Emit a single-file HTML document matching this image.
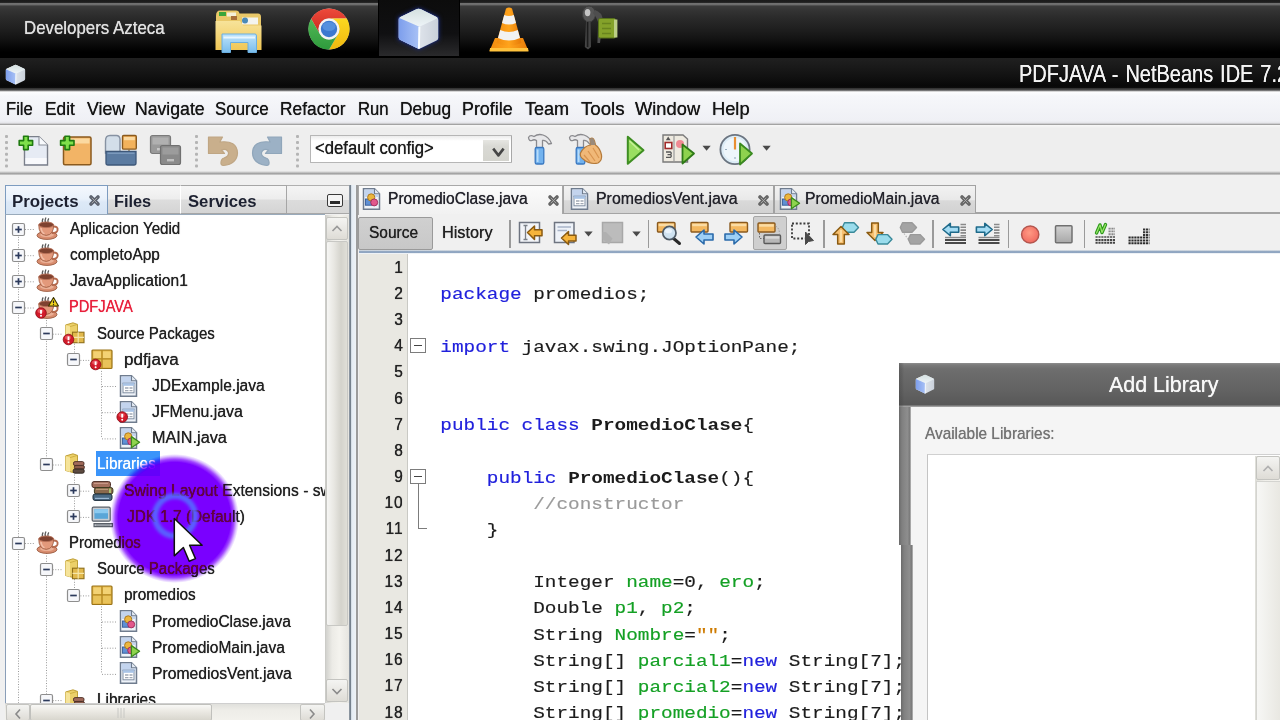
<!DOCTYPE html>
<html lang="en"><head><meta charset="utf-8"><title>PDFJAVA - NetBeans IDE 7.2</title>
<style>
*{box-sizing:border-box;margin:0;padding:0}
html,body{width:1280px;height:720px;overflow:hidden;background:#f0f0f0}
body{position:relative;font-family:"Liberation Sans",sans-serif;color:#111;font-size:16px}
.a{position:absolute}
.t{position:absolute;white-space:pre;line-height:1;transform-origin:0 0;text-shadow:0 0 .7px}
svg{position:absolute;overflow:visible}
#taskbar{left:0;top:0;width:1280px;height:58px;background:linear-gradient(#1b1b1b 0,#1e1e1e 2.4px,#707070 3.4px,#6c6c6c 4.8px,#3c3c3c 6px,#343434 10px,#2a2a2a 18px,#202020 28px,#141414 38px,#080808 46px,#000 52px,#000 100%)}
#tbsel{left:378px;top:0;width:82px;height:56px;background:linear-gradient(#0c0c0c,#101012 60%,#2a2a2c 100%);border-left:1px solid #000;border-right:1px solid #000}
#titlebar{left:0;top:58px;width:1280px;height:34px;background:linear-gradient(#202020 0,#1a1a1a 8px,#101010 20px,#080808 28px,#0c0c0c 29.6px,#383838 30.6px,#484848 31.8px,#8a8a8a 32.8px,#ececec 33.7px,#fff 34px)}
#menubar{left:0;top:92px;width:1280px;height:33px;background:linear-gradient(#fdfdfe 0,#f6f7fa 4px,#eff0f5 29px,#e4e4e8 31px,#a3a3a3 32.5px,#b8b8b8 33px)}
#toolbar{left:0;top:125px;width:1280px;height:50px;background:linear-gradient(#f8f8f8 0,#eee 3px,#eee 46px,#d0d0d0 47px,#a4a4a4 48.5px,#b4b4b4 49.3px,#e4e4e4 50px)}
/* left panel */
#ltabs{left:5px;top:185px;width:345px;height:29px;background:linear-gradient(#f4f4f4 0,#ececec 50%,#dcdcdc 51%,#d6d6d6 100%);border-top:1px solid #b0b0b0;border-bottom:1px solid #a8a8a8}
.ltab{top:185px;height:29px;border:1px solid #a6a6a6;border-left-color:#fff;background:linear-gradient(#f6f6f6 0,#ededed 48%,#dddddd 52%,#d4d4d4 100%)}
#ltab1{left:5px;top:185px;width:103px;height:30px;border:1.5px solid #7d9cc0;border-bottom:none;background:linear-gradient(#f4f8fd 0,#e9f1fb 45%,#dde9f7 55%,#d6e4f4 100%)}
#tree{left:5px;top:214px;width:320px;height:490px;background:#fff;border-left:1.5px solid #8a9eb8;border-top:1px solid #9ab}
#vsb{left:325px;top:215px;width:24px;height:488px;background:linear-gradient(90deg,#c8c8c4 0,#d4d4d0 1.5px,#ecebe6 30%,#f4f3ee 60%,#e6e5e0 100%)}
#vthumb{left:325.5px;top:241px;width:22px;height:385px;border:1px solid #c8c8c4;border-radius:2px;background:linear-gradient(90deg,#f6f6f4 0,#e8e7e2 35%,#d4d3cc 70%,#e0dfd8 100%)}
.sbtn{border:1px solid #c4c4c0;border-radius:2px;background:linear-gradient(#f4f4f2,#dedcd6)}
#hsb{left:5px;top:703px;width:320px;height:17px;background:linear-gradient(#e0e0dc 0,#eeede8 40%,#f2f1ec 100%);border-top:1px solid #cfcfcf}
#hthumb{left:30px;top:704px;width:182px;height:17px;border:1px solid #c0c0bc;border-radius:2px;background:linear-gradient(#f8f8f6 0,#eceae4 40%,#d8d6ce 100%)}
#lright{left:348.6px;top:185px;width:8px;height:535px;background:linear-gradient(90deg,#a8b0b8 0,#6e7a88 1px,#7a8692 1.8px,#e4ecf4 2.6px,#eef2f6 7px,#d8d8d8 8px)}
/* editor */
#edleft{left:356.3px;top:185px;width:1.8px;height:535px;background:#9c9c9c}
#etabrow{left:358px;top:185px;width:922px;height:29.3px;border-bottom:2px solid #a4a4a4}
.etab{top:185px;height:28px;border:1px solid #a2a2a2;border-bottom:none;background:linear-gradient(#f2f2f2 0,#e9e9e9 50%,#d9d9d9 55%,#d2d2d2 100%)}
#etab1{left:358px;top:185px;width:205px;height:30px;border:1px solid #a8a8a8;border-bottom:none;background:linear-gradient(#fbfbfb,#f1f1f1)}
#etool{left:359px;top:214px;width:921px;height:39.5px;background:linear-gradient(#f0f0f0 0,#f0f0f0 36px,#b4c2d2 36.8px,#8ea4c0 37.6px,#90a6c2 38.6px,#c4d0de 39.2px,#eef2f6 39.5px)}
#srcbtn{left:358px;top:217px;width:75px;height:33px;background:linear-gradient(#d0d0d0,#c8c8c8);border:1px solid #9a9a9a;border-radius:2px}
#togbtn{left:753px;top:216px;width:34px;height:34px;background:#cfcfcf;border:1px solid #a6a6a6;border-radius:2px}
.vsep{width:1.5px;background:#9a9a9a}
#gutter{left:359px;top:253.5px;width:49px;height:467px;background:#e9e8e2;border-right:1px solid #c9c9c4}
#code{left:408px;top:253.5px;width:872px;height:467px;background:#fff}
.fold{width:15.5px;height:15.5px;border:1px solid #7c7c7c;background:#fff}
.fold:after{content:"";position:absolute;left:3px;top:6.2px;width:7.5px;height:1.2px;background:#444}
/* dialog */
#dlg{left:898.5px;top:363px;width:382px;height:182px;background:#f5f5f5}
#dlg2{left:900.5px;top:545px;width:380px;height:175px;background:#f5f5f5}
#dtitle{left:898.5px;top:362.6px;width:382px;height:44.4px;background:linear-gradient(90deg,rgba(60,60,60,.35) 0,rgba(60,60,60,.2) 3px,rgba(60,60,60,0) 5px),linear-gradient(#8e8e8e 0,#7a7a7a 2px,#6e6e6e 6px,#686868 16px,#626262 28px,#5a5a5a 39px,#585858 41.5px,#8a8a8a 43px,#c4c4c4 44.4px)}
#dleft{left:898.5px;top:405px;width:12.5px;height:140px;background:linear-gradient(90deg,#6a6a6a 0,#808080 25%,#8e8e8e 70%,#7a7a7a 90%,#c8c8c8 100%)}
#dlist{left:927px;top:454px;width:353px;height:266px;background:#fff;border-left:1.5px solid #c4c4c4;border-top:1.5px solid #d0d0d0}
#dsb{left:1255px;top:456px;width:25px;height:264px;background:linear-gradient(90deg,#deded8 0,#f0efea 40%,#f4f3ee 100%)}
/* highlight */
#halo{left:109.5px;top:453.5px;width:129px;height:129px;border-radius:50%;mix-blend-mode:multiply;background:radial-gradient(circle closest-side,rgb(122,0,255) 0,rgb(122,0,255) 87%,rgba(128,10,255,.75) 92%,rgba(135,40,255,.3) 96.5%,rgba(140,60,255,0) 100%)}
#halo2{left:109.5px;top:453.5px;width:129px;height:129px;border-radius:50%;mix-blend-mode:lighten;background:radial-gradient(circle closest-side,rgb(100,0,66) 0,rgb(100,0,66) 86%,rgba(100,0,66,0) 95%)}
#ring{left:151.5px;top:493px;width:46px;height:46px;border-radius:50%;border:6.4px solid rgba(84,112,255,.85);filter:blur(1.4px)}
.ln{right:876.6px;letter-spacing:.9px;font-size:16px;color:#222;transform:scaleX(.97);transform-origin:100% 0}
.cd{left:440.3px;font-family:'Liberation Mono',monospace;font-size:19.38px;text-shadow:none;-webkit-text-stroke:.18px;transform:scaleY(.84);transform-origin:0 76.69%}
#dleft2{left:900.5px;top:545px;width:12.5px;height:175px;background:linear-gradient(90deg,#6a6a6a 0,#808080 25%,#8e8e8e 70%,#7a7a7a 90%,#c8c8c8 100%)}
</style></head><body>
<div class="a" id="taskbar"></div><div class="a" id="tbsel"></div><div class="a" id="titlebar"></div><div class="a" id="menubar"></div><div class="a" id="toolbar"></div>
<span class="t" style="left:24.20px;top:19.46px;font-size:18.6px;color:#e0e0e0;transform:scaleX(0.9068);">Developers Azteca</span>
<span class="t" style="left:1019.4px;top:63.26px;font-size:23.2px;color:#f4f4f4;word-spacing:1.6px;transform:scaleX(.862)">PDFJAVA - NetBeans IDE 7.2</span>
<span class="t" style="left:6.00px;top:99.99px;font-size:18.2px;color:#151515;transform:scaleX(0.9143);">File</span>
<span class="t" style="left:44.95px;top:99.99px;font-size:18.2px;color:#151515;transform:scaleX(0.9523);">Edit</span>
<span class="t" style="left:86.70px;top:99.99px;font-size:18.2px;color:#151515;transform:scaleX(0.9746);">View</span>
<span class="t" style="left:135.20px;top:99.99px;font-size:18.2px;color:#151515;transform:scaleX(0.9694);">Navigate</span>
<span class="t" style="left:215.20px;top:99.99px;font-size:18.2px;color:#151515;transform:scaleX(0.9299);">Source</span>
<span class="t" style="left:280.20px;top:99.99px;font-size:18.2px;color:#151515;transform:scaleX(0.9542);">Refactor</span>
<span class="t" style="left:358.20px;top:99.99px;font-size:18.2px;color:#151515;transform:scaleX(0.9169);">Run</span>
<span class="t" style="left:400.20px;top:99.99px;font-size:18.2px;color:#151515;transform:scaleX(0.9532);">Debug</span>
<span class="t" style="left:462.20px;top:99.99px;font-size:18.2px;color:#151515;transform:scaleX(0.9813);">Profile</span>
<span class="t" style="left:524.70px;top:99.99px;font-size:18.2px;color:#151515;transform:scaleX(0.9914);">Team</span>
<span class="t" style="left:581.20px;top:99.99px;font-size:18.2px;color:#151515;transform:scaleX(1.0266);">Tools</span>
<span class="t" style="left:635.20px;top:99.99px;font-size:18.2px;color:#151515;transform:scaleX(1.0064);">Window</span>
<span class="t" style="left:712.20px;top:99.99px;font-size:18.2px;color:#151515;transform:scaleX(1.0052);">Help</span>
<svg style="left:214px;top:8px" width="50" height="46"><defs><linearGradient id="fg" x1="0" y1="0" x2="0" y2="1"><stop offset="0" stop-color="#f7e39a"/><stop offset="1" stop-color="#f0c756"/></linearGradient><linearGradient id="bg2" x1="0" y1="0" x2="0" y2="1"><stop offset="0" stop-color="#bfe4fb"/><stop offset="1" stop-color="#78bcec"/></linearGradient></defs><path d="M2 8 Q2 2.5 6 2.5 H22 Q25 2.5 25.5 5.5 H44 Q47 5.5 47 9 V40 H2Z" fill="#e9c869"/><path d="M5 4 h7 v4 h-7z" fill="#3aa63a"/><path d="M13 4.5 h9 v4 h-9z" fill="#f4f0d8"/><path d="M17 8 h6 v4 h-6z" fill="#a8703a"/><path d="M28 9.5 h16 v7 h-16z" fill="#f4f4ee"/><circle cx="31" cy="12.5" r="3" fill="#4a8ab8"/><path d="M1.5 13 H26 L29 17.5 H47.5 V42 H1.5Z" fill="url(#fg)"/><path d="M8 26 H41 Q42.5 26 42.5 28 V44.5 H34 V34.5 H16.5 V44.5 H8 Z" fill="url(#bg2)" stroke="#6aaee0" stroke-width="1"/><path d="M9.5 29.5 H41" stroke="#e8f6ff" stroke-width="2"/></svg>
<svg style="left:307px;top:7px" width="44" height="44"><defs><linearGradient id="cr" x1="0" y1="0" x2="0" y2="1"><stop offset="0" stop-color="#ee4a3c"/><stop offset="1" stop-color="#c8281c"/></linearGradient><linearGradient id="cy" x1="0" y1="0" x2="0" y2="1"><stop offset="0" stop-color="#fbd820"/><stop offset="1" stop-color="#f0b810"/></linearGradient><linearGradient id="cg" x1="0" y1="0" x2="0" y2="1"><stop offset="0" stop-color="#52b856"/><stop offset="1" stop-color="#2e9a3c"/></linearGradient></defs><circle cx="22" cy="22" r="20.4" fill="#ddd"/><path d="M12.99 27.20 L4.10 11.80 A20.6 20.6 0 0 1 39.78 11.60 L22.00 11.60 A10.4 10.4 0 0 0 12.99 27.20Z" fill="url(#cr)"/><path d="M22.00 11.60 L39.78 11.60 A20.6 20.6 0 0 1 22.12 42.60 L31.01 27.20 A10.4 10.4 0 0 0 22.00 11.60Z" fill="url(#cy)"/><path d="M31.01 27.20 L22.12 42.60 A20.6 20.6 0 0 1 4.10 11.80 L12.99 27.20 A10.4 10.4 0 0 0 31.01 27.20Z" fill="url(#cg)"/><circle cx="22" cy="22" r="10.4" fill="#f4f4f4"/><circle cx="22" cy="22" r="8.2" fill="#3c78d0"/><ellipse cx="22" cy="19.5" rx="6.5" ry="4.6" fill="#6aa4ea" opacity=".55"/></svg>
<svg style="filter:drop-shadow(0 0 2px #1c2c7a);left:397px;top:6.5px" width="43" height="43" viewBox="0 0 20 20"><defs><linearGradient id="kl" x1="0" y1="0" x2="1" y2="0"><stop offset="0" stop-color="#7d9eec"/><stop offset="1" stop-color="#a9c2f6"/></linearGradient><linearGradient id="kr" x1="0" y1="0" x2="1" y2="0"><stop offset="0" stop-color="#f4f8fc"/><stop offset="1" stop-color="#c9d0da"/></linearGradient><linearGradient id="kt" x1="0" y1="0" x2="0" y2="1"><stop offset="0" stop-color="#d4e0e0"/><stop offset="1" stop-color="#eef4f8"/></linearGradient></defs><path d="M10 0.2 L19.6 4.6 L19.6 15.4 L10 20 L0.4 15.4 L0.4 4.6Z" fill="#1a2a6a" opacity=".6"/><path d="M10 .8 Q10.6 .8 11.4 1.2 L18.4 4.6 Q19.2 5 19.2 6 V14.4 Q19.2 15.2 18.4 15.6 L11 19.2 Q10.2 19.6 9.4 19.2 L1.6 15.4 Q.8 15 .8 14.2 V5.8 Q.8 5 1.6 4.6 L8.8 1.2 Q9.4 .8 10 .8Z" fill="url(#kr)"/><path d="M10 .8 Q10.6 .8 11.4 1.2 L18.4 4.6 Q19.2 5 18.6 5.4 L10.4 9.2 L1.4 5.2 Q.9 4.9 1.6 4.6 L8.8 1.2 Q9.4 .8 10 .8Z" fill="url(#kt)"/><path d="M.8 5.4 Q.8 4.9 1.4 5.2 L10.4 9.2 L10.2 19.45 Q9.8 19.4 9.4 19.2 L1.6 15.4 Q.8 15 .8 14.2Z" fill="url(#kl)"/><path d="M10.4 9.2 L10.2 19.4" stroke="#fafdff" stroke-width=".9"/></svg>
<svg style="left:489px;top:6px" width="40" height="46"><defs><linearGradient id="vg" x1="0" y1="0" x2="1" y2="0"><stop offset="0" stop-color="#f08a0e"/><stop offset=".5" stop-color="#ffa41c"/><stop offset="1" stop-color="#e67a08"/></linearGradient></defs><path d="M6 32 L34 32 L39.5 45 H0.5Z" fill="url(#vg)"/><path d="M1 42 H39 L39.5 45.5 H0.5Z" fill="#ffc23c"/><path d="M17 2.5 Q20 0.5 23 2.5 L32.5 37 Q20 42 7.5 37Z" fill="url(#vg)"/><path d="M15.2 9 Q20 11 24.8 9 L27 17 Q20 20 13 17Z" fill="#f2f2f2"/><path d="M11.2 24 Q20 28 28.8 24 L31 32 Q20 37 9 32Z" fill="#f2f2f2"/></svg>
<svg style="left:578px;top:4px" width="44" height="50"><ellipse cx="11" cy="10" rx="6.6" ry="8" fill="#565656" stroke="#3a3a3a" stroke-width="1"/><ellipse cx="9.6" cy="8.6" rx="2.8" ry="3.6" fill="#c4c4c4"/><path d="M8 17 L6.8 43 L10 45.5 L13 43 L12.6 17Z" fill="#444"/><path d="M9.6 18 V43" stroke="#1c1c1c" stroke-width="1.6"/><path d="M17 6 Q24 8 25 16 L22 39 L19.4 39 L20 18 Q18 12 15 9Z" fill="#4e4e4e"/><rect x="20.5" y="14.5" width="17" height="19.5" rx="1.5" fill="#84a22a" stroke="#56701a" stroke-width="1"/><rect x="36" y="15.5" width="3.4" height="18" fill="#bccf86"/><path d="M24 19.500H33M24 24.500H33M24 29.500H33" stroke="#68841e" stroke-width="1.6"/></svg>
<svg style="left:5px;top:63.5px" width="21" height="21" viewBox="0 0 20 20"><defs><linearGradient id="ml" x1="0" y1="0" x2="1" y2="0"><stop offset="0" stop-color="#7d9eec"/><stop offset="1" stop-color="#a9c2f6"/></linearGradient><linearGradient id="mr" x1="0" y1="0" x2="1" y2="0"><stop offset="0" stop-color="#f4f8fc"/><stop offset="1" stop-color="#c9d0da"/></linearGradient><linearGradient id="mt" x1="0" y1="0" x2="0" y2="1"><stop offset="0" stop-color="#d4e0e0"/><stop offset="1" stop-color="#eef4f8"/></linearGradient></defs><path d="M10 .8 Q10.6 .8 11.4 1.2 L18.4 4.6 Q19.2 5 19.2 6 V14.4 Q19.2 15.2 18.4 15.6 L11 19.2 Q10.2 19.6 9.4 19.2 L1.6 15.4 Q.8 15 .8 14.2 V5.8 Q.8 5 1.6 4.6 L8.8 1.2 Q9.4 .8 10 .8Z" fill="url(#mr)"/><path d="M10 .8 Q10.6 .8 11.4 1.2 L18.4 4.6 Q19.2 5 18.6 5.4 L10.4 9.2 L1.4 5.2 Q.9 4.9 1.6 4.6 L8.8 1.2 Q9.4 .8 10 .8Z" fill="url(#mt)"/><path d="M.8 5.4 Q.8 4.9 1.4 5.2 L10.4 9.2 L10.2 19.45 Q9.8 19.4 9.4 19.2 L1.6 15.4 Q.8 15 .8 14.2Z" fill="url(#ml)"/><path d="M10.4 9.2 L10.2 19.4" stroke="#fafdff" stroke-width=".9"/></svg>
<svg style="left:3.5px;top:132.6px" width="6" height="34"><rect x="1" y="2.0" width="3" height="3" rx="1" fill="#b4b4b4"/><rect x="1" y="7.9" width="3" height="3" rx="1" fill="#b4b4b4"/><rect x="1" y="13.8" width="3" height="3" rx="1" fill="#b4b4b4"/><rect x="1" y="19.7" width="3" height="3" rx="1" fill="#b4b4b4"/><rect x="1" y="25.6" width="3" height="3" rx="1" fill="#b4b4b4"/><rect x="1" y="31.5" width="3" height="3" rx="1" fill="#b4b4b4"/></svg>
<svg style="left:194px;top:132.6px" width="6" height="34"><rect x="1" y="2.0" width="3" height="3" rx="1" fill="#b4b4b4"/><rect x="1" y="7.9" width="3" height="3" rx="1" fill="#b4b4b4"/><rect x="1" y="13.8" width="3" height="3" rx="1" fill="#b4b4b4"/><rect x="1" y="19.7" width="3" height="3" rx="1" fill="#b4b4b4"/><rect x="1" y="25.6" width="3" height="3" rx="1" fill="#b4b4b4"/><rect x="1" y="31.5" width="3" height="3" rx="1" fill="#b4b4b4"/></svg>
<svg style="left:295px;top:132.6px" width="6" height="34"><rect x="1" y="2.0" width="3" height="3" rx="1" fill="#b4b4b4"/><rect x="1" y="7.9" width="3" height="3" rx="1" fill="#b4b4b4"/><rect x="1" y="13.8" width="3" height="3" rx="1" fill="#b4b4b4"/><rect x="1" y="19.7" width="3" height="3" rx="1" fill="#b4b4b4"/><rect x="1" y="25.6" width="3" height="3" rx="1" fill="#b4b4b4"/><rect x="1" y="31.5" width="3" height="3" rx="1" fill="#b4b4b4"/></svg>
<svg style="left:18px;top:133.6px" width="32" height="33"><path d="M6.5 2.6 H21 L29.5 11 V31 H6.5Z" fill="#e6ebf4" stroke="#7a7f8a" stroke-width="1.4"/><path d="M21 2.6 V11 H29.5" fill="#f8fafd" stroke="#8a8f9a" stroke-width="1.1"/><path d="M7.5 24 H28.5 V30 H7.5Z" fill="#f8f9fc"/><path d="M5.6 2.2 h4.6 v4.4 h4.4 v4.6 h-4.4 v4.4 h-4.6 v-4.4 h-4.4 v-4.6 h4.4z" fill="#7fe04a" stroke="#1f7a10" stroke-width="1.6" stroke-linejoin="round"/></svg>
<svg style="left:59px;top:133.6px" width="34" height="33"><rect x="4.5" y="3" width="27.5" height="27.8" rx="1.5" fill="#f2b466" stroke="#8a5a1e" stroke-width="1.5"/><rect x="6" y="4.5" width="24.5" height="5" fill="#fbd9a0"/><path d="M6 2.2 h4.6 v4.4 h4.4 v4.6 h-4.4 v4.4 h-4.6 v-4.4 h-4.4 v-4.6 h4.4z" fill="#7fe04a" stroke="#1f7a10" stroke-width="1.6" stroke-linejoin="round"/></svg>
<svg style="left:103px;top:132.6px" width="35" height="34"><path d="M2.5 8 Q2.5 2.5 7 2.5 H13.5 Q16.5 2.5 17 6 V20 H2.5Z" fill="#d3dee9" stroke="#8792a2" stroke-width="1.4"/><rect x="19.5" y="2.5" width="13.8" height="13.6" rx="1.2" fill="#f2b25c" stroke="#8a5a1e" stroke-width="1.4"/><rect x="21" y="4" width="10.8" height="3.2" fill="#fbd9a0"/><path d="M26 16.5V18.5" stroke="#8a6a3a" stroke-width="1.2"/><path d="M3 18.5 H33 V30 Q33 32 31 32 H5 Q3 32 3 30Z" fill="#5b7ba1" stroke="#3e587a" stroke-width="1.3"/><path d="M4.5 20.2 H31.5" stroke="#7f9dc0" stroke-width="1.4"/></svg>
<svg style="left:148px;top:132.6px" width="35" height="34"><rect x="2.5" y="2.5" width="20" height="18" rx="2" fill="#9a9a9a" stroke="#7a7a7a" stroke-width="1.2"/><rect x="4.5" y="4.5" width="16" height="7" fill="#b0b0b0"/><rect x="9" y="15" width="7" height="2.4" fill="#c8c8c8"/><rect x="12.5" y="12.5" width="20" height="19" rx="2" fill="#8a8a8a" stroke="#707070" stroke-width="1.2"/><rect x="14.5" y="14.5" width="16" height="7" fill="#9c9c9c"/><rect x="19" y="26" width="7" height="2.4" fill="#c0c0c0"/></svg>
<svg style="left:206px;top:133.6px" width="34" height="33"><path d="M2.5 3 H16.5 L13.8 8 Q31 6 31.5 19 Q31 30 17.5 31.5 Q14.5 31.5 15 28 Q15.5 24.5 18 24 Q23 22.5 22.5 18.5 Q21 14 15.5 16 L18.5 19.5 H2.5Z" fill="#c9af8c" stroke="#bfa684" stroke-width="1.2" stroke-linejoin="round"/></svg>
<svg style="left:250px;top:133.6px" width="34" height="33"><path d="M31.5 3 H17.5 L20.2 8 Q3 6 2.5 19 Q3 30 16.5 31.5 Q19.5 31.5 19 28 Q18.5 24.5 16 24 Q11 22.5 11.5 18.5 Q13 14 18.5 16 L15.5 19.5 H31.5Z" fill="#9cb1c5" stroke="#90a6ba" stroke-width="1.2" stroke-linejoin="round"/></svg>
<svg style="left:527px;top:133px" width="27" height="33"><path d="M1.5 4.5 Q3 1.5 7 3.5 Q11 0.5 16 2 Q22 4 24.5 10.5 L21.5 11 Q19 7 15.5 7.5 V15 H9.5 V7.5 Q7 6 5 7.5 Q2 8.5 1.5 4.500Z" fill="#e8e8ea" stroke="#8a8a8e" stroke-width="1.3" stroke-linejoin="round"/><rect x="8.2" y="14.5" width="8.6" height="16.5" rx="1.6" fill="#72b2ee" stroke="#3a78c0" stroke-width="1.3"/><path d="M10.6 16.5 V29" stroke="#b8dcfa" stroke-width="1.8"/></svg>
<svg style="left:568px;top:133px" width="36" height="33"><path d="M1.5 4.5 Q3 1.5 7 3.5 Q11 0.5 16 2 Q22 4 24.5 10.5 L21.5 11 Q19 7 15.5 7.5 V15 H9.5 V7.5 Q7 6 5 7.5 Q2 8.5 1.5 4.500Z" fill="#e8e8ea" stroke="#8a8a8e" stroke-width="1.3" stroke-linejoin="round"/><rect x="8.2" y="14.5" width="8.6" height="16.5" rx="1.6" fill="#72b2ee" stroke="#3a78c0" stroke-width="1.3"/><path d="M10.6 16.5 V29" stroke="#b8dcfa" stroke-width="1.8"/><path d="M22 6 Q25 3.5 26.5 8 L27.5 12 Q32 15 33.5 22 Q34.5 27 30 30 Q22 32 15 26 Q11.5 23.5 12.5 20 Q16 13 22.5 12Z" fill="#f0b878" stroke="#b47a3a" stroke-width="1.2"/><path d="M16 22 L22 29 M20 18 L27 28 M25 15 L31 25" stroke="#d89450" stroke-width="1.2"/><path d="M22 6 Q25 3.5 26.5 8 L27.5 12 L22.5 12Z" fill="#9a8a7a"/></svg>
<svg style="left:625px;top:133.5px" width="21" height="33"><path d="M2.8 2.8 L18.5 16.2 L2.8 29.800Z" fill="#9ade62" stroke="#3e8e22" stroke-width="2" stroke-linejoin="round"/><path d="M4.5 7 L14 16" stroke="#c8f29a" stroke-width="1.5"/></svg>
<svg style="left:661px;top:133px" width="35" height="34"><path d="M2 2 H22 L26.5 6 V29 H2Z" fill="#eeeae0" stroke="#7a7a7a" stroke-width="1.4"/><path d="M13 2.5 V28.5" stroke="#9a9a9a" stroke-width="1.2"/><path d="M7.2 3.6 L9.6 7.2 H4.800Z" fill="#555"/><rect x="4.2" y="9.5" width="6.6" height="6" fill="#fff" stroke="#a02a2a" stroke-width="1.6"/><path d="M5 19 h4.5 q1.5 1.2 0 2.6 h-3 h3 q1.5 1.2 0 2.8 h-4.5" fill="none" stroke="#555" stroke-width="1.3"/><circle cx="19" cy="11" r="4" fill="#f08a92"/><path d="M21.5 11.5 L33 20.5 L21.5 30.500Z" fill="#8ed24e" stroke="#2e7a18" stroke-width="1.8" stroke-linejoin="round"/></svg>
<svg style="left:702px;top:145px" width="10" height="7"><path d="M.5 .8 H8.7 L4.6 5.800Z" fill="#4a4a4a"/></svg>
<svg style="left:718px;top:133px" width="36" height="34"><circle cx="17" cy="16.5" r="14.6" fill="#dcecf6" stroke="#6a7480" stroke-width="1.8"/><circle cx="17" cy="16.5" r="11.5" fill="#eef6fb"/><path d="M17 4 V16.5" stroke="#e89034" stroke-width="2.2"/><path d="M7 16.500H9M17 26V24M25 16.500H27" stroke="#9ab0c0" stroke-width="1.2"/><path d="M22 10.5 L34 20.5 L22 31.500Z" fill="#8ed24e" stroke="#3a8a20" stroke-width="1.8" stroke-linejoin="round"/></svg>
<svg style="left:761.5px;top:145px" width="10" height="7"><path d="M.5 .8 H8.7 L4.6 5.800Z" fill="#4a4a4a"/></svg>
<div class="a" style="left:310px;top:135.2px;width:202px;height:27.8px;background:linear-gradient(#ececec 0,#fff 5px,#fff 100%);border:1.7px solid #b6b6b6;border-right-color:#a8a8a8;border-radius:1px"></div>
<div class="a" style="left:483px;top:140px;width:26px;height:20.5px;background:linear-gradient(#e6e6e2 0,#d9d9d4 30%,#d4d4ce 100%)"></div>
<svg style="left:490px;top:145px" width="16" height="14"><path d="M3.2 3.6 L8.4 10.4 L13.6 3.6" fill="none" stroke="#454545" stroke-width="2.6" stroke-linejoin="round"/></svg>
<span class="t" style="left:314.50px;top:138.79px;font-size:18.2px;color:#1c1c1c;transform:scaleX(0.9178);">&lt;default config&gt;</span>
<div class="a" id="ltabs"></div>
<div class="a ltab" style="left:107px;width:74px"></div><div class="a ltab" style="left:180px;width:107px"></div>
<div class="a" id="ltab1"></div>
<span class="t" style="left:11.70px;top:193.56px;font-size:16px;color:#1c2030;font-weight:700;transform:scaleX(1.0548);text-shadow:none;">Projects</span>
<span class="t" style="left:113.60px;top:193.56px;font-size:16px;color:#1c2030;font-weight:700;transform:scaleX(1.0201);text-shadow:none;">Files</span>
<span class="t" style="left:188.20px;top:193.56px;font-size:16px;color:#1c2030;font-weight:700;transform:scaleX(1.0419);text-shadow:none;">Services</span>
<svg style="left:89px;top:195px" width="11" height="11"><path d="M2 2 L9 9 M9 2 L2 9" stroke="#5e6470" stroke-width="3.6" stroke-linecap="round"/><path d="M2.8 2.8 L8.2 8.2 M8.2 2.8 L2.8 8.2" stroke="#b4b4b4" stroke-width="0.8"/></svg>
<div class="a" style="left:327px;top:194px;width:16px;height:13px;border:1.5px solid #3a3a3a;border-radius:2px;background:#f4f4f4"></div><div class="a" style="left:330px;top:201px;width:10px;height:3px;background:#2a2a2a"></div>
<div class="a" id="tree"></div>
<svg style="left:0px;top:0px" width="330" height="720"><path d="M18.5 229.0V720.0" stroke="#9a9a9a" stroke-width="1" stroke-dasharray="1 1.6"/><path d="M46.5 317.5V464.5" stroke="#9a9a9a" stroke-width="1" stroke-dasharray="1 1.6"/><path d="M46.5 553.0V720.0" stroke="#9a9a9a" stroke-width="1" stroke-dasharray="1 1.6"/><path d="M74.5 343.7V359.9" stroke="#9a9a9a" stroke-width="1" stroke-dasharray="1 1.6"/><path d="M74.5 474.5V516.9" stroke="#9a9a9a" stroke-width="1" stroke-dasharray="1 1.6"/><path d="M74.5 579.2V595.4" stroke="#9a9a9a" stroke-width="1" stroke-dasharray="1 1.6"/><path d="M101.5 370.9V438.4" stroke="#9a9a9a" stroke-width="1" stroke-dasharray="1 1.6"/><path d="M101.5 606.4V673.9" stroke="#9a9a9a" stroke-width="1" stroke-dasharray="1 1.6"/><path d="M25.0 229.5H34.0" stroke="#9a9a9a" stroke-width="1" stroke-dasharray="1 1.6"/><path d="M25.0 255.7H34.0" stroke="#9a9a9a" stroke-width="1" stroke-dasharray="1 1.6"/><path d="M25.0 281.8H34.0" stroke="#9a9a9a" stroke-width="1" stroke-dasharray="1 1.6"/><path d="M25.0 308.0H34.0" stroke="#9a9a9a" stroke-width="1" stroke-dasharray="1 1.6"/><path d="M52.7 334.2H61.7" stroke="#9a9a9a" stroke-width="1" stroke-dasharray="1 1.6"/><path d="M80.4 360.4H89.4" stroke="#9a9a9a" stroke-width="1" stroke-dasharray="1 1.6"/><path d="M102 386.5H117" stroke="#9a9a9a" stroke-width="1" stroke-dasharray="1 1.6"/><path d="M102 412.7H117" stroke="#9a9a9a" stroke-width="1" stroke-dasharray="1 1.6"/><path d="M102 438.9H117" stroke="#9a9a9a" stroke-width="1" stroke-dasharray="1 1.6"/><path d="M52.7 465.0H61.7" stroke="#9a9a9a" stroke-width="1" stroke-dasharray="1 1.6"/><path d="M80.4 491.2H89.4" stroke="#9a9a9a" stroke-width="1" stroke-dasharray="1 1.6"/><path d="M80.4 517.4H89.4" stroke="#9a9a9a" stroke-width="1" stroke-dasharray="1 1.6"/><path d="M25.0 543.5H34.0" stroke="#9a9a9a" stroke-width="1" stroke-dasharray="1 1.6"/><path d="M52.7 569.7H61.7" stroke="#9a9a9a" stroke-width="1" stroke-dasharray="1 1.6"/><path d="M80.4 595.9H89.4" stroke="#9a9a9a" stroke-width="1" stroke-dasharray="1 1.6"/><path d="M102 622.0H117" stroke="#9a9a9a" stroke-width="1" stroke-dasharray="1 1.6"/><path d="M102 648.2H117" stroke="#9a9a9a" stroke-width="1" stroke-dasharray="1 1.6"/><path d="M102 674.4H117" stroke="#9a9a9a" stroke-width="1" stroke-dasharray="1 1.6"/><path d="M52.7 700.6H61.7" stroke="#9a9a9a" stroke-width="1" stroke-dasharray="1 1.6"/></svg>
<div class="a" style="left:96px;top:450.8px;width:64px;height:25.6px;background:#3a94fa"></div>
<span class="t" style="left:70.30px;top:220.96px;font-size:16px;color:#222;transform:scaleX(0.9464);">Aplicacion Yedid</span>
<svg style="left:12.0px;top:222.5px" width="13" height="13"><rect x="0.5" y="0.5" width="12" height="12" rx="1.5" fill="#f6f7fa" stroke="#8e8e8e" stroke-width="1.2"/><path d="M3.2 6.5H9.8" stroke="#2c3a5c" stroke-width="1.7"/><path d="M6.5 3.2V9.8" stroke="#2c3a5c" stroke-width="1.7"/></svg>
<svg style="left:36.0px;top:217.0px" width="23" height="23"><path d="M7 6.5 q-1.6-2.6 .2-5.2 M9.8 6.5 q-1.6-3 .2-6 M12.6 6.5 q-1.6-2.6 .2-5.2" fill="none" stroke="#5a5a5a" stroke-width="1.2"/><ellipse cx="11" cy="18.4" rx="10" ry="4" fill="#d98d6f" stroke="#9a5a40" stroke-width=".9"/><ellipse cx="11" cy="17.8" rx="6.8" ry="2.3" fill="#eab096"/><path d="M16.5 9.5 q6-.6 5 3.8 q-.8 3-5.6 2.8" fill="none" stroke="#b56a4e" stroke-width="1.9"/><path d="M2.8 7.8 Q2.6 17.8 10.2 18.4 Q17.8 17.8 17.6 7.8Z" fill="#e3997b" stroke="#a05c42" stroke-width=".9"/><ellipse cx="10.2" cy="7.8" rx="7.4" ry="2.8" fill="#7e4230" stroke="#b87058" stroke-width=".9"/><path d="M5 11 Q5.5 15.5 8.5 16.8" fill="none" stroke="#f6c8b4" stroke-width="1.6" opacity=".8"/></svg>
<span class="t" style="left:70.30px;top:247.13px;font-size:16px;color:#222;transform:scaleX(0.9616);">completoApp</span>
<svg style="left:12.0px;top:248.67000000000002px" width="13" height="13"><rect x="0.5" y="0.5" width="12" height="12" rx="1.5" fill="#f6f7fa" stroke="#8e8e8e" stroke-width="1.2"/><path d="M3.2 6.5H9.8" stroke="#2c3a5c" stroke-width="1.7"/><path d="M6.5 3.2V9.8" stroke="#2c3a5c" stroke-width="1.7"/></svg>
<svg style="left:36.0px;top:243.17000000000002px" width="23" height="23"><path d="M7 6.5 q-1.6-2.6 .2-5.2 M9.8 6.5 q-1.6-3 .2-6 M12.6 6.5 q-1.6-2.6 .2-5.2" fill="none" stroke="#5a5a5a" stroke-width="1.2"/><ellipse cx="11" cy="18.4" rx="10" ry="4" fill="#d98d6f" stroke="#9a5a40" stroke-width=".9"/><ellipse cx="11" cy="17.8" rx="6.8" ry="2.3" fill="#eab096"/><path d="M16.5 9.5 q6-.6 5 3.8 q-.8 3-5.6 2.8" fill="none" stroke="#b56a4e" stroke-width="1.9"/><path d="M2.8 7.8 Q2.6 17.8 10.2 18.4 Q17.8 17.8 17.6 7.8Z" fill="#e3997b" stroke="#a05c42" stroke-width=".9"/><ellipse cx="10.2" cy="7.8" rx="7.4" ry="2.8" fill="#7e4230" stroke="#b87058" stroke-width=".9"/><path d="M5 11 Q5.5 15.5 8.5 16.8" fill="none" stroke="#f6c8b4" stroke-width="1.6" opacity=".8"/></svg>
<span class="t" style="left:70.30px;top:273.30px;font-size:16px;color:#222;transform:scaleX(0.9738);">JavaApplication1</span>
<svg style="left:12.0px;top:274.84000000000003px" width="13" height="13"><rect x="0.5" y="0.5" width="12" height="12" rx="1.5" fill="#f6f7fa" stroke="#8e8e8e" stroke-width="1.2"/><path d="M3.2 6.5H9.8" stroke="#2c3a5c" stroke-width="1.7"/><path d="M6.5 3.2V9.8" stroke="#2c3a5c" stroke-width="1.7"/></svg>
<svg style="left:36.0px;top:269.34000000000003px" width="23" height="23"><path d="M7 6.5 q-1.6-2.6 .2-5.2 M9.8 6.5 q-1.6-3 .2-6 M12.6 6.5 q-1.6-2.6 .2-5.2" fill="none" stroke="#5a5a5a" stroke-width="1.2"/><ellipse cx="11" cy="18.4" rx="10" ry="4" fill="#d98d6f" stroke="#9a5a40" stroke-width=".9"/><ellipse cx="11" cy="17.8" rx="6.8" ry="2.3" fill="#eab096"/><path d="M16.5 9.5 q6-.6 5 3.8 q-.8 3-5.6 2.8" fill="none" stroke="#b56a4e" stroke-width="1.9"/><path d="M2.8 7.8 Q2.6 17.8 10.2 18.4 Q17.8 17.8 17.6 7.8Z" fill="#e3997b" stroke="#a05c42" stroke-width=".9"/><ellipse cx="10.2" cy="7.8" rx="7.4" ry="2.8" fill="#7e4230" stroke="#b87058" stroke-width=".9"/><path d="M5 11 Q5.5 15.5 8.5 16.8" fill="none" stroke="#f6c8b4" stroke-width="1.6" opacity=".8"/></svg>
<span class="t" style="left:69.30px;top:299.47px;font-size:16px;color:#e8203c;transform:scaleX(0.9161);">PDFJAVA</span>
<svg style="left:12.0px;top:301.01px" width="13" height="13"><rect x="0.5" y="0.5" width="12" height="12" rx="1.5" fill="#f6f7fa" stroke="#8e8e8e" stroke-width="1.2"/><path d="M3.2 6.5H9.8" stroke="#2c3a5c" stroke-width="1.7"/></svg>
<svg style="left:36.0px;top:295.51px" width="23" height="23"><path d="M7 6.5 q-1.6-2.6 .2-5.2 M9.8 6.5 q-1.6-3 .2-6 M12.6 6.5 q-1.6-2.6 .2-5.2" fill="none" stroke="#5a5a5a" stroke-width="1.2"/><ellipse cx="11" cy="18.4" rx="10" ry="4" fill="#d98d6f" stroke="#9a5a40" stroke-width=".9"/><ellipse cx="11" cy="17.8" rx="6.8" ry="2.3" fill="#eab096"/><path d="M16.5 9.5 q6-.6 5 3.8 q-.8 3-5.6 2.8" fill="none" stroke="#b56a4e" stroke-width="1.9"/><path d="M2.8 7.8 Q2.6 17.8 10.2 18.4 Q17.8 17.8 17.6 7.8Z" fill="#e3997b" stroke="#a05c42" stroke-width=".9"/><ellipse cx="10.2" cy="7.8" rx="7.4" ry="2.8" fill="#7e4230" stroke="#b87058" stroke-width=".9"/><path d="M5 11 Q5.5 15.5 8.5 16.8" fill="none" stroke="#f6c8b4" stroke-width="1.6" opacity=".8"/><path d="M17.5 1.5 L22.5 10 H12.5Z" fill="#f2d21c" stroke="#3a3200" stroke-width="1.1" stroke-linejoin="round"/><path d="M17.5 4.6V7.2" stroke="#222" stroke-width="1.2"/><circle cx="17.5" cy="8.6" r=".7" fill="#222"/><circle cx="5" cy="17" r="5.3" fill="#d21a2a" stroke="#8a0a14" stroke-width=".8"/><ellipse cx="4.5" cy="15.1" rx="3" ry="2" fill="#f06a70" opacity=".7"/><path d="M5 13.9V17.7" stroke="#fff" stroke-width="1.9"/><circle cx="5" cy="19.8" r="1" fill="#fff"/></svg>
<span class="t" style="left:97.30px;top:325.64px;font-size:16px;color:#222;transform:scaleX(0.9393);">Source Packages</span>
<svg style="left:39.5px;top:327.18px" width="13" height="13"><rect x="0.5" y="0.5" width="12" height="12" rx="1.5" fill="#f6f7fa" stroke="#8e8e8e" stroke-width="1.2"/><path d="M3.2 6.5H9.8" stroke="#2c3a5c" stroke-width="1.7"/></svg>
<svg style="left:63.5px;top:322.18px" width="23" height="23"><path d="M1.5 3 L9 .8 L13.5 2.4 V17.5 L9 19.5 L1.5 17.5Z" fill="#ecd069" stroke="#b8962a" stroke-width=".9"/><path d="M1.5 3 L6 4.6 V19 L1.5 17.5Z" fill="#f6e49a"/><path d="M6 4.6 L13.5 2.4" stroke="#c8a838" stroke-width=".8"/><rect x="8.5" y="10.2" width="11.5" height="10.5" fill="#e2b94c" stroke="#8f6f1a" stroke-width="1.1"/><path d="M8.5 15.4H20M14.2 10.2V20.7" stroke="#f6e6a8" stroke-width="1.2"/><circle cx="4.5" cy="17.5" r="5.3" fill="#d21a2a" stroke="#8a0a14" stroke-width=".8"/><ellipse cx="4" cy="15.6" rx="3" ry="2" fill="#f06a70" opacity=".7"/><path d="M4.5 14.4V18.2" stroke="#fff" stroke-width="1.9"/><circle cx="4.5" cy="20.3" r="1" fill="#fff"/></svg>
<span class="t" style="left:124.30px;top:351.81px;font-size:16px;color:#222;transform:scaleX(1.0621);">pdfjava</span>
<svg style="left:67.0px;top:353.35px" width="13" height="13"><rect x="0.5" y="0.5" width="12" height="12" rx="1.5" fill="#f6f7fa" stroke="#8e8e8e" stroke-width="1.2"/><path d="M3.2 6.5H9.8" stroke="#2c3a5c" stroke-width="1.7"/></svg>
<svg style="left:91.0px;top:348.35px" width="23" height="23"><rect x="1" y="2" width="20" height="18.5" rx="1" fill="#e4b548" stroke="#9a7418" stroke-width="1.2"/><rect x="2.4" y="3.4" width="7.8" height="6.6" fill="#f3d274"/><rect x="11.8" y="3.4" width="7.8" height="6.6" fill="#f3d274"/><rect x="2.4" y="11.6" width="7.8" height="7.4" fill="#e9c35a"/><rect x="11.8" y="11.6" width="7.8" height="7.4" fill="#e9c35a"/><path d="M11 2V20.5M1 10.8H21" stroke="#b48a24" stroke-width="1.3"/><circle cx="4.6" cy="16.5" r="5.3" fill="#d21a2a" stroke="#8a0a14" stroke-width=".8"/><ellipse cx="4.1" cy="14.6" rx="3" ry="2" fill="#f06a70" opacity=".7"/><path d="M4.6 13.4V17.2" stroke="#fff" stroke-width="1.9"/><circle cx="4.6" cy="19.3" r="1" fill="#fff"/></svg>
<span class="t" style="left:152.30px;top:377.98px;font-size:16px;color:#222;transform:scaleX(0.9757);">JDExample.java</span>
<svg style="left:118.5px;top:374.52px" width="23" height="23"><path d="M1.5 .8 H12.5 L17.5 5.8 V21.2 H1.5Z" fill="#eef3f9" stroke="#6f7c8e" stroke-width="1.5"/><path d="M2.3 1.6 H12 V6.4 H16.7 V9 H2.3Z" fill="#c3d4ee"/><path d="M12.5 .800 V5.8 H17.5" fill="#e4ebf4" stroke="#6f7c8e" stroke-width="1.1"/><rect x="4" y="8.2" width="11" height="9.6" fill="#fff" stroke="#7f8ea2" stroke-width="1"/><rect x="4" y="8.2" width="11" height="2.6" fill="#a9c4e6"/><path d="M6 13H9.5M10.5 13H13.5M6 15.6H9.5M10.5 15.6H13.5" stroke="#a0a8b4" stroke-width="1.3"/></svg>
<span class="t" style="left:152.30px;top:404.15px;font-size:16px;color:#222;transform:scaleX(0.9913);">JFMenu.java</span>
<svg style="left:118.5px;top:400.69px" width="23" height="23"><path d="M1.5 .8 H12.5 L17.5 5.8 V21.2 H1.5Z" fill="#eef3f9" stroke="#6f7c8e" stroke-width="1.5"/><path d="M2.3 1.6 H12 V6.4 H16.7 V9 H2.3Z" fill="#c3d4ee"/><path d="M12.5 .800 V5.8 H17.5" fill="#e4ebf4" stroke="#6f7c8e" stroke-width="1.1"/><rect x="4" y="8.2" width="11" height="9.6" fill="#fff" stroke="#7f8ea2" stroke-width="1"/><rect x="4" y="8.2" width="11" height="2.6" fill="#a9c4e6"/><path d="M6 13H9.5M10.5 13H13.5M6 15.6H9.5M10.5 15.6H13.5" stroke="#a0a8b4" stroke-width="1.3"/><circle cx="3.2" cy="16" r="5.3" fill="#d21a2a" stroke="#8a0a14" stroke-width=".8"/><ellipse cx="2.7" cy="14.1" rx="3" ry="2" fill="#f06a70" opacity=".7"/><path d="M3.2 12.9V16.7" stroke="#fff" stroke-width="1.9"/><circle cx="3.2" cy="18.8" r="1" fill="#fff"/></svg>
<span class="t" style="left:152.30px;top:430.32px;font-size:16px;color:#222;transform:scaleX(1.0136);">MAIN.java</span>
<svg style="left:118.5px;top:426.86px" width="23" height="23"><path d="M1.5 .8 H12.5 L17.5 5.8 V21.2 H1.5Z" fill="#eef3f9" stroke="#6f7c8e" stroke-width="1.5"/><path d="M2.3 1.6 H12 V6.4 H16.7 V9 H2.3Z" fill="#c3d4ee"/><path d="M12.5 .800 V5.8 H17.5" fill="#e4ebf4" stroke="#6f7c8e" stroke-width="1.1"/><rect x="3.4" y="11" width="6.4" height="6.2" fill="#5f90d4" stroke="#345a96" stroke-width=".9"/><circle cx="9.2" cy="9.4" r="3.6" fill="#ecb63e" stroke="#a8741a" stroke-width=".9"/><circle cx="12.2" cy="14.4" r="3.5" fill="#e2588c" stroke="#9a2a58" stroke-width=".9"/><path d="M12.4 9.6 L20.6 15.2 L12.4 20.8Z" fill="#8fd44e" stroke="#3c8a1c" stroke-width="1.3" stroke-linejoin="round"/></svg>
<span class="t" style="left:97.30px;top:456.49px;font-size:16px;color:#fff;transform:scaleX(0.9583);">Libraries</span>
<svg style="left:39.5px;top:458.03000000000003px" width="13" height="13"><rect x="0.5" y="0.5" width="12" height="12" rx="1.5" fill="#f6f7fa" stroke="#8e8e8e" stroke-width="1.2"/><path d="M3.2 6.5H9.8" stroke="#2c3a5c" stroke-width="1.7"/></svg>
<svg style="left:63.5px;top:453.03000000000003px" width="23" height="23"><path d="M1.5 3 L9 .8 L13.5 2.4 V17.5 L9 19.5 L1.5 17.5Z" fill="#ecd069" stroke="#b8962a" stroke-width=".9"/><path d="M1.5 3 L6 4.6 V19 L1.5 17.5Z" fill="#f6e49a"/><path d="M6 4.6 L13.5 2.4" stroke="#c8a838" stroke-width=".8"/><rect x="9.5" y="8.6" width="10.5" height="4" rx="1.6" fill="#a06a5a" stroke="#4a2c24" stroke-width=".9"/><rect x="10.4" y="12.4" width="10" height="3.8" rx="1.6" fill="#8a5a4a" stroke="#4a2c24" stroke-width=".9"/><rect x="9.2" y="16" width="11" height="4.2" rx="1.6" fill="#5c4a40" stroke="#2a201c" stroke-width=".9"/></svg>
<span class="t" style="left:124.30px;top:482.66px;font-size:16px;color:#222;transform:scaleX(0.9777);">Swing Layout Extensions - sw</span>
<svg style="left:67.0px;top:484.20000000000005px" width="13" height="13"><rect x="0.5" y="0.5" width="12" height="12" rx="1.5" fill="#f6f7fa" stroke="#8e8e8e" stroke-width="1.2"/><path d="M3.2 6.5H9.8" stroke="#2c3a5c" stroke-width="1.7"/><path d="M6.5 3.2V9.8" stroke="#2c3a5c" stroke-width="1.7"/></svg>
<svg style="left:91.0px;top:479.70000000000005px" width="23" height="23"><rect x="1" y="1.6" width="18.5" height="6" rx="2" fill="#a4705e" stroke="#4a2c24" stroke-width="1"/><path d="M3 3.4H17" stroke="#c89888" stroke-width="1.2"/><rect x="3.4" y="7.6" width="18.5" height="6.4" rx="2" fill="#8a6a4e" stroke="#3a3a1c" stroke-width="1"/><path d="M19 8.6 v4.4" stroke="#a8c070" stroke-width="2"/><path d="M5 9.4H17" stroke="#b89878" stroke-width="1.2"/><rect x="2" y="14" width="19" height="6.4" rx="2" fill="#4a6a84" stroke="#1c2c3a" stroke-width="1"/><path d="M4 18.4H18" stroke="#9ab8d4" stroke-width="1.2"/></svg>
<span class="t" style="left:127.30px;top:508.83px;font-size:16px;color:#222;transform:scaleX(0.9599);">JDK 1.7 (Default)</span>
<svg style="left:67.0px;top:510.37px" width="13" height="13"><rect x="0.5" y="0.5" width="12" height="12" rx="1.5" fill="#f6f7fa" stroke="#8e8e8e" stroke-width="1.2"/><path d="M3.2 6.5H9.8" stroke="#2c3a5c" stroke-width="1.7"/><path d="M6.5 3.2V9.8" stroke="#2c3a5c" stroke-width="1.7"/></svg>
<svg style="left:91.0px;top:506.37px" width="23" height="23"><rect x="1.2" y="1.2" width="18" height="14" rx="1.2" fill="#c8ccd2" stroke="#5a6068" stroke-width="1.2"/><rect x="3.4" y="3.2" width="13.6" height="9.6" fill="#5aa6d8"/><rect x="3.4" y="3.2" width="13.6" height="4" fill="#8ccaf0"/><path d="M3 17.6H21.5V20.6H3Z" fill="#b8bcc2" stroke="#5a6068" stroke-width="1.1"/><path d="M5 19H19" stroke="#7a8088" stroke-width="1"/></svg>
<span class="t" style="left:69.30px;top:535.00px;font-size:16px;color:#222;transform:scaleX(0.9388);">Promedios</span>
<svg style="left:12.0px;top:536.54px" width="13" height="13"><rect x="0.5" y="0.5" width="12" height="12" rx="1.5" fill="#f6f7fa" stroke="#8e8e8e" stroke-width="1.2"/><path d="M3.2 6.5H9.8" stroke="#2c3a5c" stroke-width="1.7"/></svg>
<svg style="left:36.0px;top:531.04px" width="23" height="23"><path d="M7 6.5 q-1.6-2.6 .2-5.2 M9.8 6.5 q-1.6-3 .2-6 M12.6 6.5 q-1.6-2.6 .2-5.2" fill="none" stroke="#5a5a5a" stroke-width="1.2"/><ellipse cx="11" cy="18.4" rx="10" ry="4" fill="#d98d6f" stroke="#9a5a40" stroke-width=".9"/><ellipse cx="11" cy="17.8" rx="6.8" ry="2.3" fill="#eab096"/><path d="M16.5 9.5 q6-.6 5 3.8 q-.8 3-5.6 2.8" fill="none" stroke="#b56a4e" stroke-width="1.9"/><path d="M2.8 7.8 Q2.6 17.8 10.2 18.4 Q17.8 17.8 17.6 7.8Z" fill="#e3997b" stroke="#a05c42" stroke-width=".9"/><ellipse cx="10.2" cy="7.8" rx="7.4" ry="2.8" fill="#7e4230" stroke="#b87058" stroke-width=".9"/><path d="M5 11 Q5.5 15.5 8.5 16.8" fill="none" stroke="#f6c8b4" stroke-width="1.6" opacity=".8"/></svg>
<span class="t" style="left:97.30px;top:561.17px;font-size:16px;color:#222;transform:scaleX(0.9393);">Source Packages</span>
<svg style="left:39.5px;top:562.71px" width="13" height="13"><rect x="0.5" y="0.5" width="12" height="12" rx="1.5" fill="#f6f7fa" stroke="#8e8e8e" stroke-width="1.2"/><path d="M3.2 6.5H9.8" stroke="#2c3a5c" stroke-width="1.7"/></svg>
<svg style="left:63.5px;top:557.71px" width="23" height="23"><path d="M1.5 3 L9 .8 L13.5 2.4 V17.5 L9 19.5 L1.5 17.5Z" fill="#ecd069" stroke="#b8962a" stroke-width=".9"/><path d="M1.5 3 L6 4.6 V19 L1.5 17.5Z" fill="#f6e49a"/><path d="M6 4.6 L13.5 2.4" stroke="#c8a838" stroke-width=".8"/><rect x="8.5" y="10.2" width="11.5" height="10.5" fill="#e2b94c" stroke="#8f6f1a" stroke-width="1.1"/><path d="M8.5 15.4H20M14.2 10.2V20.7" stroke="#f6e6a8" stroke-width="1.2"/></svg>
<span class="t" style="left:124.30px;top:587.34px;font-size:16px;color:#222;transform:scaleX(0.9611);">promedios</span>
<svg style="left:67.0px;top:588.88px" width="13" height="13"><rect x="0.5" y="0.5" width="12" height="12" rx="1.5" fill="#f6f7fa" stroke="#8e8e8e" stroke-width="1.2"/><path d="M3.2 6.5H9.8" stroke="#2c3a5c" stroke-width="1.7"/></svg>
<svg style="left:91.0px;top:583.88px" width="23" height="23"><rect x="1" y="2" width="20" height="18.5" rx="1" fill="#e4b548" stroke="#9a7418" stroke-width="1.2"/><rect x="2.4" y="3.4" width="7.8" height="6.6" fill="#f3d274"/><rect x="11.8" y="3.4" width="7.8" height="6.6" fill="#f3d274"/><rect x="2.4" y="11.6" width="7.8" height="7.4" fill="#e9c35a"/><rect x="11.8" y="11.6" width="7.8" height="7.4" fill="#e9c35a"/><path d="M11 2V20.5M1 10.8H21" stroke="#b48a24" stroke-width="1.3"/></svg>
<span class="t" style="left:152.30px;top:613.51px;font-size:16px;color:#222;transform:scaleX(0.9694);">PromedioClase.java</span>
<svg style="left:118.5px;top:610.05px" width="23" height="23"><path d="M1.5 .8 H12.5 L17.5 5.8 V21.2 H1.5Z" fill="#eef3f9" stroke="#6f7c8e" stroke-width="1.5"/><path d="M2.3 1.6 H12 V6.4 H16.7 V9 H2.3Z" fill="#c3d4ee"/><path d="M12.5 .800 V5.8 H17.5" fill="#e4ebf4" stroke="#6f7c8e" stroke-width="1.1"/><rect x="3.4" y="11" width="6.4" height="6.2" fill="#5f90d4" stroke="#345a96" stroke-width=".9"/><circle cx="9.2" cy="9.4" r="3.6" fill="#ecb63e" stroke="#a8741a" stroke-width=".9"/><circle cx="12.2" cy="14.4" r="3.5" fill="#e2588c" stroke="#9a2a58" stroke-width=".9"/></svg>
<span class="t" style="left:152.30px;top:639.68px;font-size:16px;color:#222;transform:scaleX(0.9697);">PromedioMain.java</span>
<svg style="left:118.5px;top:636.22px" width="23" height="23"><path d="M1.5 .8 H12.5 L17.5 5.8 V21.2 H1.5Z" fill="#eef3f9" stroke="#6f7c8e" stroke-width="1.5"/><path d="M2.3 1.6 H12 V6.4 H16.7 V9 H2.3Z" fill="#c3d4ee"/><path d="M12.5 .800 V5.8 H17.5" fill="#e4ebf4" stroke="#6f7c8e" stroke-width="1.1"/><rect x="3.4" y="11" width="6.4" height="6.2" fill="#5f90d4" stroke="#345a96" stroke-width=".9"/><circle cx="9.2" cy="9.4" r="3.6" fill="#ecb63e" stroke="#a8741a" stroke-width=".9"/><circle cx="12.2" cy="14.4" r="3.5" fill="#e2588c" stroke="#9a2a58" stroke-width=".9"/><path d="M12.4 9.6 L20.6 15.2 L12.4 20.8Z" fill="#8fd44e" stroke="#3c8a1c" stroke-width="1.3" stroke-linejoin="round"/></svg>
<span class="t" style="left:152.30px;top:665.85px;font-size:16px;color:#222;transform:scaleX(0.9823);">PromediosVent.java</span>
<svg style="left:118.5px;top:662.3900000000001px" width="23" height="23"><path d="M1.5 .8 H12.5 L17.5 5.8 V21.2 H1.5Z" fill="#eef3f9" stroke="#6f7c8e" stroke-width="1.5"/><path d="M2.3 1.6 H12 V6.4 H16.7 V9 H2.3Z" fill="#c3d4ee"/><path d="M12.5 .800 V5.8 H17.5" fill="#e4ebf4" stroke="#6f7c8e" stroke-width="1.1"/><rect x="4" y="8.2" width="11" height="9.6" fill="#fff" stroke="#7f8ea2" stroke-width="1"/><rect x="4" y="8.2" width="11" height="2.6" fill="#a9c4e6"/><path d="M6 13H9.5M10.5 13H13.5M6 15.6H9.5M10.5 15.6H13.5" stroke="#a0a8b4" stroke-width="1.3"/></svg>
<span class="t" style="left:97.30px;top:692.02px;font-size:16px;color:#222;transform:scaleX(0.9583);">Libraries</span>
<svg style="left:39.5px;top:693.5600000000001px" width="13" height="13"><rect x="0.5" y="0.5" width="12" height="12" rx="1.5" fill="#f6f7fa" stroke="#8e8e8e" stroke-width="1.2"/><path d="M3.2 6.5H9.8" stroke="#2c3a5c" stroke-width="1.7"/></svg>
<svg style="left:63.5px;top:688.5600000000001px" width="23" height="23"><path d="M1.5 3 L9 .8 L13.5 2.4 V17.5 L9 19.5 L1.5 17.5Z" fill="#ecd069" stroke="#b8962a" stroke-width=".9"/><path d="M1.5 3 L6 4.6 V19 L1.5 17.5Z" fill="#f6e49a"/><path d="M6 4.6 L13.5 2.4" stroke="#c8a838" stroke-width=".8"/><rect x="9.5" y="8.6" width="10.5" height="4" rx="1.6" fill="#a06a5a" stroke="#4a2c24" stroke-width=".9"/><rect x="10.4" y="12.4" width="10" height="3.8" rx="1.6" fill="#8a5a4a" stroke="#4a2c24" stroke-width=".9"/><rect x="9.2" y="16" width="11" height="4.2" rx="1.6" fill="#5c4a40" stroke="#2a201c" stroke-width=".9"/></svg>
<div class="a" id="vsb"></div><div class="a" id="vthumb"></div>
<div class="a sbtn" style="left:325.5px;top:217px;width:22px;height:23px"></div><svg style="left:329px;top:222px" width="16" height="12"><path d="M3.5 9 L8 4.5 L12.5 9" fill="none" stroke="#9a9a9a" stroke-width="1.6"/></svg>
<div class="a sbtn" style="left:325.5px;top:679px;width:22px;height:23px"></div><svg style="left:329px;top:685px" width="16" height="12"><path d="M3.5 4 L8 8.5 L12.5 4" fill="none" stroke="#8a8a8a" stroke-width="1.6"/></svg>
<div class="a" id="lright"></div>
<div class="a" id="hsb"></div><div class="a" id="hthumb"></div>
<div class="a sbtn" style="left:6px;top:704px;width:24px;height:17px"></div><svg style="left:12px;top:706px" width="12" height="16"><path d="M8 3.5 L4 8 L8 12.5" fill="none" stroke="#8a8a8a" stroke-width="1.6"/></svg>
<div class="a sbtn" style="left:300px;top:704px;width:25px;height:17px"></div><svg style="left:306px;top:706px" width="12" height="16"><path d="M4 3.5 L8 8 L4 12.5" fill="none" stroke="#8a8a8a" stroke-width="1.6"/></svg>
<svg style="left:116px;top:707px" width="12" height="12"><path d="M2 1V11M5 1V11M8 1V11" stroke="#c8c8c4" stroke-width="1"/></svg>
<div class="a" id="etabrow"></div>
<div class="a etab" style="left:563px;width:211px"></div><div class="a etab" style="left:774px;width:202px"></div>
<div class="a" id="etab1"></div>
<div class="a" id="edleft"></div>
<span class="t" style="left:388.20px;top:191.46px;font-size:16px;color:#24242c;transform:scaleX(0.9749);">PromedioClase.java</span>
<span class="t" style="left:596.20px;top:191.46px;font-size:16px;color:#24242c;transform:scaleX(0.9950);">PromediosVent.java</span>
<span class="t" style="left:805.20px;top:191.46px;font-size:16px;color:#24242c;transform:scaleX(0.9828);">PromedioMain.java</span>
<svg style="left:548px;top:194.5px" width="11" height="11"><path d="M2 2 L9 9 M9 2 L2 9" stroke="#666" stroke-width="3.6" stroke-linecap="round"/><path d="M2.8 2.8 L8.2 8.2 M8.2 2.8 L2.8 8.2" stroke="#b4b4b4" stroke-width="0.8"/></svg>
<svg style="left:757.5px;top:194.5px" width="11" height="11"><path d="M2 2 L9 9 M9 2 L2 9" stroke="#666" stroke-width="3.6" stroke-linecap="round"/><path d="M2.8 2.8 L8.2 8.2 M8.2 2.8 L2.8 8.2" stroke="#b4b4b4" stroke-width="0.8"/></svg>
<svg style="left:960px;top:194.5px" width="11" height="11"><path d="M2 2 L9 9 M9 2 L2 9" stroke="#666" stroke-width="3.6" stroke-linecap="round"/><path d="M2.8 2.8 L8.2 8.2 M8.2 2.8 L2.8 8.2" stroke="#b4b4b4" stroke-width="0.8"/></svg>
<svg style="left:362px;top:188.0px" width="23" height="23"><path d="M1.5 .8 H12.5 L17.5 5.8 V21.2 H1.5Z" fill="#eef3f9" stroke="#6f7c8e" stroke-width="1.5"/><path d="M2.3 1.6 H12 V6.4 H16.7 V9 H2.3Z" fill="#c3d4ee"/><path d="M12.5 .800 V5.8 H17.5" fill="#e4ebf4" stroke="#6f7c8e" stroke-width="1.1"/><rect x="3.4" y="11" width="6.4" height="6.2" fill="#5f90d4" stroke="#345a96" stroke-width=".9"/><circle cx="9.2" cy="9.4" r="3.6" fill="#ecb63e" stroke="#a8741a" stroke-width=".9"/><circle cx="12.2" cy="14.4" r="3.5" fill="#e2588c" stroke="#9a2a58" stroke-width=".9"/></svg>
<svg style="left:570px;top:188.0px" width="23" height="23"><path d="M1.5 .8 H12.5 L17.5 5.8 V21.2 H1.5Z" fill="#eef3f9" stroke="#6f7c8e" stroke-width="1.5"/><path d="M2.3 1.6 H12 V6.4 H16.7 V9 H2.3Z" fill="#c3d4ee"/><path d="M12.5 .800 V5.8 H17.5" fill="#e4ebf4" stroke="#6f7c8e" stroke-width="1.1"/><rect x="4" y="8.2" width="11" height="9.6" fill="#fff" stroke="#7f8ea2" stroke-width="1"/><rect x="4" y="8.2" width="11" height="2.6" fill="#a9c4e6"/><path d="M6 13H9.5M10.5 13H13.5M6 15.6H9.5M10.5 15.6H13.5" stroke="#a0a8b4" stroke-width="1.3"/></svg>
<svg style="left:779px;top:188.0px" width="23" height="23"><path d="M1.5 .8 H12.5 L17.5 5.8 V21.2 H1.5Z" fill="#eef3f9" stroke="#6f7c8e" stroke-width="1.5"/><path d="M2.3 1.6 H12 V6.4 H16.7 V9 H2.3Z" fill="#c3d4ee"/><path d="M12.5 .800 V5.8 H17.5" fill="#e4ebf4" stroke="#6f7c8e" stroke-width="1.1"/><rect x="3.4" y="11" width="6.4" height="6.2" fill="#5f90d4" stroke="#345a96" stroke-width=".9"/><circle cx="9.2" cy="9.4" r="3.6" fill="#ecb63e" stroke="#a8741a" stroke-width=".9"/><circle cx="12.2" cy="14.4" r="3.5" fill="#e2588c" stroke="#9a2a58" stroke-width=".9"/><path d="M12.4 9.6 L20.6 15.2 L12.4 20.8Z" fill="#8fd44e" stroke="#3c8a1c" stroke-width="1.3" stroke-linejoin="round"/></svg>
<div class="a" id="etool"></div><div class="a" id="srcbtn"></div><div class="a" id="togbtn"></div>
<span class="t" style="left:369.20px;top:224.76px;font-size:16px;color:#222;transform:scaleX(0.9684);">Source</span>
<span class="t" style="left:442.20px;top:224.76px;font-size:16px;color:#222;transform:scaleX(1.0164);">History</span>
<div class="a vsep" style="left:509.2px;top:220px;height:28px"></div>
<div class="a vsep" style="left:647.7px;top:220px;height:28px"></div>
<div class="a vsep" style="left:823.2px;top:220px;height:28px"></div>
<div class="a vsep" style="left:932.4000000000001px;top:220px;height:28px"></div>
<div class="a vsep" style="left:1007.7px;top:220px;height:28px"></div>
<div class="a vsep" style="left:1083.6000000000001px;top:220px;height:28px"></div>
<svg style="left:517px;top:218px" width="28" height="30"><rect x="2.5" y="4.5" width="20" height="20" fill="#f2f4f8" stroke="#6e7480" stroke-width="1.5"/><path d="M6.5 7.5 H10.5 M8.5 7.5 V21.5 M6.5 21.5 H10.5" stroke="#7a8088" stroke-width="1.3"/><path d="M10.5 14.5 L17.5 8 V11.8 H25 V17.8 H17.5 V21.500Z" fill="#f6b43a" stroke="#8a5a10" stroke-width="1.5" stroke-linejoin="round"/></svg>
<svg style="left:552px;top:218px" width="28" height="30"><rect x="2.5" y="4.5" width="19.5" height="20" fill="#eef2f8" stroke="#6e7480" stroke-width="1.5"/><path d="M5.5 9 H19 M5.5 12.5 H15" stroke="#a8b4c8" stroke-width="1.5"/><path d="M9.5 20 L16.5 13.5 V17.2 H24 V23 H16.5 V26.500Z" fill="#f6b43a" stroke="#8a5a10" stroke-width="1.5" stroke-linejoin="round"/></svg>
<svg style="left:584px;top:230.5px" width="10" height="7"><path d="M.3 .5 H8.7 L4.5 5.600Z" fill="#4a4a4a"/></svg>
<svg style="left:600px;top:218px" width="28" height="30"><rect x="2.5" y="4.5" width="20" height="20" fill="#bcbcbc" stroke="#a8a8a8" stroke-width="1.5"/><path d="M12.5 20.5 L6 14 H2.5 V21 L9 26.500Z" fill="#b0b0b0"/></svg>
<svg style="left:632px;top:230.5px" width="10" height="7"><path d="M.3 .5 H8.7 L4.5 5.600Z" fill="#4a4a4a"/></svg>
<svg style="left:655px;top:218px" width="28" height="30"><rect x="2.5" y="4.5" width="17.5" height="9.5" rx="1" fill="#f4b860" stroke="#8a5a1e" stroke-width="1.4"/><rect x="3.7" y="5.7" width="15.1" height="2.5" fill="#fbdca4"/><path d="M18 20 L24.5 25.5" stroke="#2a2a2a" stroke-width="3" stroke-linecap="round"/><circle cx="14.4" cy="15" r="6.6" fill="#cfe2f0" stroke="#4e5a66" stroke-width="1.7"/><ellipse cx="13.5" cy="13" rx="3.5" ry="2.3" fill="#f0f8ff" opacity=".8"/></svg>
<svg style="left:689px;top:218px" width="28" height="30"><rect x="2" y="4.5" width="17" height="9.5" rx="1" fill="#f4b860" stroke="#8a5a1e" stroke-width="1.4"/><rect x="3.2" y="5.7" width="14.6" height="2.5" fill="#fbdca4"/><g transform="translate(5.5,11)"><path d="M1.5 8 L9.5 1 V5 H18.5 V11 H9.5 V15Z" fill="#9ed0f6" stroke="#2a6aaa" stroke-width="1.6" stroke-linejoin="round"/></g></svg>
<svg style="left:722px;top:218px" width="28" height="30"><rect x="8" y="4.5" width="17.5" height="9.5" rx="1" fill="#f4b860" stroke="#8a5a1e" stroke-width="1.4"/><rect x="9.2" y="5.7" width="15.1" height="2.5" fill="#fbdca4"/><g transform="translate(1.5,11)"><path d="M18.5 8 L10.5 1 V5 H1.5 V11 H10.5 V15Z" fill="#9ed0f6" stroke="#2a6aaa" stroke-width="1.6" stroke-linejoin="round"/></g></svg>
<svg style="left:755px;top:218px" width="28" height="30"><rect x="3" y="5" width="17" height="9" rx="1" fill="#f4b860" stroke="#8a5a1e" stroke-width="1.4"/><rect x="4.2" y="6.2" width="14.6" height="2.5" fill="#fbdca4"/><path d="M4.5 15 V20.5 H9" fill="none" stroke="#6a6a6a" stroke-width="1" stroke-dasharray="1.5 1.5"/><path d="M20.5 8 Q24.5 10 24.5 16" fill="none" stroke="#9a9a9a" stroke-width="1" stroke-dasharray="1.5 1.5"/><rect x="9" y="17" width="16.5" height="8.5" rx="1" fill="#b8b8b8" stroke="#5a5a5a" stroke-width="1.4"/><rect x="10.3" y="18.3" width="14" height="2.4" fill="#d8d8d8"/></svg>
<svg style="left:789px;top:218px" width="28" height="30"><rect x="3" y="5.5" width="17" height="15" fill="none" stroke="#3a3a3a" stroke-width="1.8" stroke-dasharray="2 1.8"/><path d="M16.5 14 V26.5 L19.5 23.5 L24.5 22.500Z" fill="#4a4a4a" stroke="#4a4a4a" stroke-width="1" stroke-linejoin="round"/></svg>
<svg style="left:831px;top:218px" width="28" height="30"><path d="M13.5 4.8 h9.5 l4.5 4.7 l-4.5 4.7 h-9.5 l-2.2 -4.700z" fill="#9adcec" stroke="#3a8a9a" stroke-width="1.4" stroke-linejoin="round"/><path d="M10 8.5 L18 16.5 H13.3 V26 H6.7 V16.5 H2Z" fill="#f8c070" stroke="#8a5a10" stroke-width="1.5" stroke-linejoin="round"/><path d="M10 12 V24" stroke="#fde4b0" stroke-width="1.6"/></svg>
<svg style="left:865px;top:218px" width="28" height="30"><path d="M10 22.5 L18 14.5 H13.3 V5 H6.7 V14.5 H2Z" fill="#f8c070" stroke="#8a5a10" stroke-width="1.5" stroke-linejoin="round"/><path d="M10 7 V19" stroke="#fde4b0" stroke-width="1.6"/><path d="M13 16.6 h9.5 l4.5 4.7 l-4.5 4.7 h-9.5 l-2.2 -4.700z" fill="#9adcec" stroke="#3a8a9a" stroke-width="1.4" stroke-linejoin="round"/></svg>
<svg style="left:899px;top:218px" width="28" height="30"><path d="M3.5 4.8 h9.5 l4.5 4.7 l-4.5 4.7 h-9.5 l-2.2 -4.700z" fill="#a4a4a4" stroke="#9a9a9a" stroke-width="1.4" stroke-linejoin="round"/><path d="M5 15.5 L9 21" stroke="#b8b8b8" stroke-width="1.2" stroke-dasharray="1.5 1.5"/><path d="M11.5 16.6 h9.5 l4.5 4.7 l-4.5 4.7 h-9.5 l-2.2 -4.700z" fill="#a4a4a4" stroke="#9a9a9a" stroke-width="1.4" stroke-linejoin="round"/></svg>
<svg style="left:941px;top:218px" width="28" height="30"><path d="M19.5 6.5 h5.5 M19.5 9.3 h5.5 M19.5 12.1 h5.5 M19.5 14.9 h5.5 M19.5 17.7 h5.5" stroke="#8a8a8a" stroke-width="1.6"/><path d="M4 22 h21 M4 25 h21" stroke="#4a4a4a" stroke-width="1.9"/><path d="M4 19.5 h21" stroke="#8a8a8a" stroke-width="1.4"/><g transform="translate(0.5,4.5) scale(.93,.88)"><path d="M1.5 8 L9.5 1 V5 H18.5 V11 H9.5 V15Z" fill="#a4dcf4" stroke="#1e6a8a" stroke-width="1.7" stroke-linejoin="round"/></g></svg>
<svg style="left:974px;top:218px" width="28" height="30"><path d="M20 6.5 h5.5 M20 9.3 h5.5 M20 12.1 h5.5 M20 14.9 h5.5 M20 17.7 h5.5" stroke="#8a8a8a" stroke-width="1.6"/><path d="M4.5 22 h21 M4.5 25 h21" stroke="#4a4a4a" stroke-width="1.9"/><path d="M4.5 19.5 h21" stroke="#8a8a8a" stroke-width="1.4"/><g transform="translate(1,4.5) scale(.93,.88)"><path d="M18.5 8 L10.5 1 V5 H1.5 V11 H10.5 V15Z" fill="#a4dcf4" stroke="#1e6a8a" stroke-width="1.7" stroke-linejoin="round"/></g></svg>
<svg style="left:1019px;top:223px" width="24" height="24"><defs><radialGradient id="rg" cx=".45" cy=".4" r=".6"><stop offset="0" stop-color="#ff9a84"/><stop offset="1" stop-color="#f06a60"/></radialGradient></defs><circle cx="11.2" cy="11.5" r="8.6" fill="url(#rg)" stroke="#b4564e" stroke-width="1.5"/></svg>
<svg style="left:1053px;top:223px" width="24" height="24"><defs><linearGradient id="sg" x1="0" y1="0" x2="0" y2="1"><stop offset="0" stop-color="#d2d2d2"/><stop offset="1" stop-color="#a8a8a8"/></linearGradient></defs><rect x="2.5" y="2.8" width="16.5" height="17" rx="1" fill="url(#sg)" stroke="#707070" stroke-width="1.5"/></svg>
<svg style="left:1093px;top:218px" width="28" height="30"><path d="M15.5 10.6 h6.5 M15.5 13.4 h6.5 M15.5 16.2 h6.5" stroke="#8a8a8a" stroke-width="1.9" stroke-dasharray="2.2 .7"/><path d="M2.5 19 h19.5" stroke="#777" stroke-width="1.9" stroke-dasharray="2.2 .7"/><path d="M2.5 21.9 h19.5 M2.5 24.8 h19.5" stroke="#444" stroke-width="2" stroke-dasharray="2.2 .7"/><path d="M3.5 15 L7 7 M7 7 L9 14.5 M9 14.5 L12.5 6.5" fill="none" stroke="#2e9a1c" stroke-width="3.4" stroke-linecap="round" stroke-linejoin="round"/><path d="M3.5 15 L7 7 L9 14.5 L12.5 6.5" fill="none" stroke="#9ae66a" stroke-width="1.2" stroke-linecap="round" stroke-linejoin="round"/></svg>
<svg style="left:1126px;top:218px" width="28" height="30"><path d="M17 11.4 h6.5 M17 14.2 h6.5 M17 17 h6.5" stroke="#333" stroke-width="2" stroke-dasharray="2.2 .7"/><path d="M2.5 19.6 h21 M2.5 22.4 h21 M2.5 25.2 h21" stroke="#2a2a2a" stroke-width="2" stroke-dasharray="2.2 .7"/></svg>
<div class="a" id="gutter"></div><div class="a" id="code"></div>
<span class="t ln" style="top:259.76px">1</span>
<span class="t ln" style="top:285.93px">2</span>
<span class="t ln" style="top:312.10px">3</span>
<span class="t ln" style="top:338.27px">4</span>
<span class="t ln" style="top:364.44px">5</span>
<span class="t ln" style="top:390.61px">6</span>
<span class="t ln" style="top:416.78px">7</span>
<span class="t ln" style="top:442.95px">8</span>
<span class="t ln" style="top:469.12px">9</span>
<span class="t ln" style="top:495.29px">10</span>
<span class="t ln" style="top:521.46px">11</span>
<span class="t ln" style="top:547.63px">12</span>
<span class="t ln" style="top:573.80px">13</span>
<span class="t ln" style="top:599.97px">14</span>
<span class="t ln" style="top:626.14px">15</span>
<span class="t ln" style="top:652.31px">16</span>
<span class="t ln" style="top:678.48px">17</span>
<span class="t ln" style="top:704.65px">18</span>
<span class="t cd" style="top:285.31px"><span style="color:#2020dc">package</span><span style="color:#1c1c1c"> promedios;</span></span>
<span class="t cd" style="top:337.65px"><span style="color:#2020dc">import</span><span style="color:#1c1c1c"> javax.swing.JOptionPane;</span></span>
<span class="t cd" style="top:416.16px"><span style="color:#2020dc">public class</span><span style="color:#1c1c1c"> </span><span style="color:#1c1c1c;font-weight:700;-webkit-text-stroke:0">PromedioClase</span><span style="color:#1c1c1c">{</span></span>
<span class="t cd" style="top:468.50px"><span style="color:#1c1c1c">    </span><span style="color:#2020dc">public</span><span style="color:#1c1c1c"> </span><span style="color:#1c1c1c;font-weight:700;-webkit-text-stroke:0">PromedioClase</span><span style="color:#1c1c1c">(){</span></span>
<span class="t cd" style="top:494.67px"><span style="color:#1c1c1c">        </span><span style="color:#9a9a9a">//constructor</span></span>
<span class="t cd" style="top:520.84px"><span style="color:#1c1c1c">    }</span></span>
<span class="t cd" style="top:573.18px"><span style="color:#1c1c1c">        Integer </span><span style="color:#14a024">name</span><span style="color:#1c1c1c">=0, </span><span style="color:#14a024">ero</span><span style="color:#1c1c1c">;</span></span>
<span class="t cd" style="top:599.35px"><span style="color:#1c1c1c">        Double </span><span style="color:#14a024">p1</span><span style="color:#1c1c1c">, </span><span style="color:#14a024">p2</span><span style="color:#1c1c1c">;</span></span>
<span class="t cd" style="top:625.52px"><span style="color:#1c1c1c">        String </span><span style="color:#14a024">Nombre</span><span style="color:#1c1c1c">=</span><span style="color:#ce7b00">&quot;&quot;</span><span style="color:#1c1c1c">;</span></span>
<span class="t cd" style="top:651.69px"><span style="color:#1c1c1c">        String[] </span><span style="color:#14a024">parcial1</span><span style="color:#1c1c1c">=</span><span style="color:#2020dc">new</span><span style="color:#1c1c1c"> String[7];</span></span>
<span class="t cd" style="top:677.86px"><span style="color:#1c1c1c">        String[] </span><span style="color:#14a024">parcial2</span><span style="color:#1c1c1c">=</span><span style="color:#2020dc">new</span><span style="color:#1c1c1c"> String[7];</span></span>
<span class="t cd" style="top:704.03px"><span style="color:#1c1c1c">        String[] </span><span style="color:#14a024">promedio</span><span style="color:#1c1c1c">=</span><span style="color:#2020dc">new</span><span style="color:#1c1c1c"> String[7];</span></span>
<div class="a fold" style="left:410.3px;top:337.7px"></div><div class="a fold" style="left:410.3px;top:468.6px"></div>
<div class="a" style="left:417.5px;top:484px;width:1.2px;height:45px;background:#7c7c7c"></div><div class="a" style="left:417.5px;top:528px;width:9px;height:1px;background:#7c7c7c"></div>
<div class="a" id="dlg"></div><div class="a" id="dlg2"></div><div class="a" id="dleft"></div><div class="a" id="dleft2"></div><div class="a" id="dtitle"></div><div class="a" id="dlist"></div><div class="a" id="dsb"></div>
<div class="a sbtn" style="left:1256px;top:456px;width:24px;height:24px"></div><svg style="left:1260px;top:462px" width="16" height="12"><path d="M3.5 9 L8 4.5 L12.5 9" fill="none" stroke="#b0b0b0" stroke-width="1.6"/></svg>
<div class="a" style="left:1256px;top:481px;width:26px;height:250px;border:1px solid #d4d4d0;background:linear-gradient(90deg,#f7f7f5,#e8e7e1)"></div>
<svg style="left:915px;top:374px" width="20" height="20" viewBox="0 0 20 20"><defs><linearGradient id="dql" x1="0" y1="0" x2="1" y2="0"><stop offset="0" stop-color="#7d9eec"/><stop offset="1" stop-color="#a9c2f6"/></linearGradient><linearGradient id="dqr" x1="0" y1="0" x2="1" y2="0"><stop offset="0" stop-color="#f4f8fc"/><stop offset="1" stop-color="#c9d0da"/></linearGradient><linearGradient id="dqt" x1="0" y1="0" x2="0" y2="1"><stop offset="0" stop-color="#d4e0e0"/><stop offset="1" stop-color="#eef4f8"/></linearGradient></defs><path d="M10 .8 Q10.6 .8 11.4 1.2 L18.4 4.6 Q19.2 5 19.2 6 V14.4 Q19.2 15.2 18.4 15.6 L11 19.2 Q10.2 19.6 9.4 19.2 L1.6 15.4 Q.8 15 .8 14.2 V5.8 Q.8 5 1.6 4.6 L8.8 1.2 Q9.4 .8 10 .8Z" fill="url(#dqr)"/><path d="M10 .8 Q10.6 .8 11.4 1.2 L18.4 4.6 Q19.2 5 18.6 5.4 L10.4 9.2 L1.4 5.2 Q.9 4.9 1.6 4.6 L8.8 1.2 Q9.4 .8 10 .8Z" fill="url(#dqt)"/><path d="M.8 5.4 Q.8 4.9 1.4 5.2 L10.4 9.2 L10.2 19.45 Q9.8 19.4 9.4 19.2 L1.6 15.4 Q.8 15 .8 14.2Z" fill="url(#dql)"/><path d="M10.4 9.2 L10.2 19.4" stroke="#fafdff" stroke-width=".9"/></svg>
<span class="t" style="left:1108.70px;top:374.42px;font-size:21.6px;color:#f8f8f8;transform:scaleX(0.9924);">Add Library</span>
<span class="t" style="left:925.20px;top:425.95px;font-size:16.6px;color:#747474;transform:scaleX(0.9263);">Available Libraries:</span>
<div class="a" id="halo"></div><div class="a" id="halo2"></div><div class="a" id="ring"></div>
<svg style="left:173.2px;top:517px" width="32.4" height="47.5" viewBox="0 0 30 44"><path d="M1.2 1.4 L1.2 36 L9.6 28.3 L15 41 L20.8 38.6 L15.4 26.2 L27 26.2 Z" fill="#fff" stroke="#111" stroke-width="1.4" stroke-linejoin="round"/></svg>
</body></html>
